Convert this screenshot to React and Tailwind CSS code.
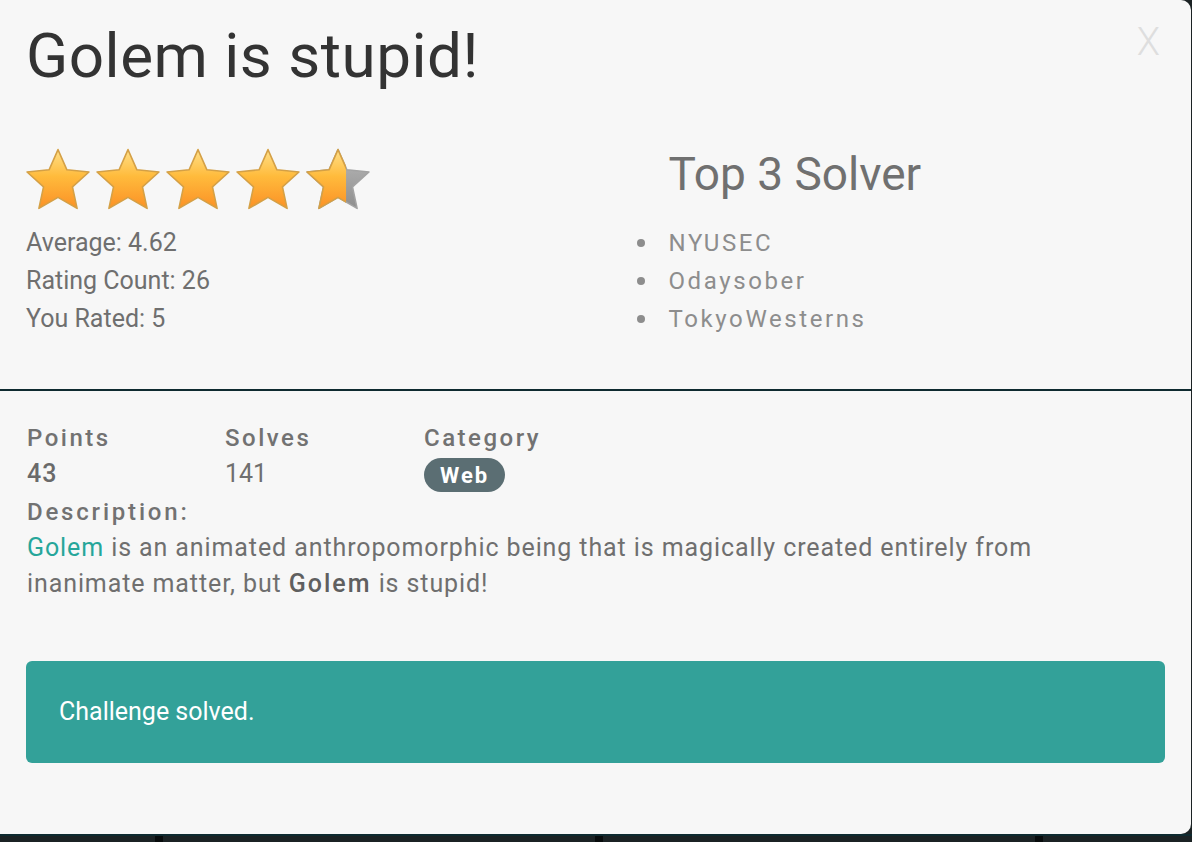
//
// ─── Fenêtre de détail d'un challenge (modale) ─────────────────────
//

import React from 'react'

const solvers = ['NYUSEC', 'Odaysober', 'TokyoWesterns']

const STAR =
  'M32 3 L40.5 22.3 L61.5 24.4 L45.8 38.5 L50.2 59.1 L32 48.5 L13.8 59.1 L18.2 38.5 L2.5 24.4 L23.5 22.3 Z'

function Star({ id, fill = 1 }) {
  return (
    <svg width="64" height="64" viewBox="1.5 1.5 61 61" className="shrink-0">
      <defs>
        <linearGradient id={`gold-${id}`} x1="0" y1="0" x2="0" y2="1">
          <stop offset="0" stopColor="#ffe08a" />
          <stop offset="0.45" stopColor="#ffbb3c" />
          <stop offset="1" stopColor="#fb9126" />
        </linearGradient>
        <linearGradient id={`grey-${id}`} x1="0" y1="0" x2="0" y2="1">
          <stop offset="0" stopColor="#b9b9b9" />
          <stop offset="1" stopColor="#8e8e8e" />
        </linearGradient>
        <clipPath id={`clip-${id}`}>
          <rect x="0" y="0" width={64 * fill} height="64" />
        </clipPath>
      </defs>
      {fill < 1 && (
        <path
          d={STAR}
          fill={`url(#grey-${id})`}
          stroke="#a3a3a3"
          strokeWidth="1.5"
          strokeLinejoin="round"
        />
      )}
      <g clipPath={`url(#clip-${id})`}>
        <path
          d={STAR}
          fill={`url(#gold-${id})`}
          stroke="#d4a046"
          strokeWidth="1.5"
          strokeLinejoin="round"
        />
      </g>
    </svg>
  )
}

function App() {
  return (
    <div className="w-full h-[842px] bg-[#1b2224] flex flex-col overflow-hidden font-['Roboto','Liberation_Sans',sans-serif]">
      <div className="flex">
        <div className="relative w-[1191px] h-[834px] bg-[#f7f7f7] rounded-tr-[10px] rounded-br-[10px] flex flex-col">
          {/* bouton fermer */}
          <span className="absolute top-[23px] right-[31px] text-[38px] leading-none font-light text-[#dedede]">
            X
          </span>

          {/* ─── En-tête : titre, notes, top solvers ─── */}
          <div className="px-[26px] pt-[21px] pb-[51px]">
            <h1 className="text-[62px] leading-[70px] tracking-[0.5px] text-[#333333]">
              Golem is stupid!
            </h1>
            <div className="flex mt-[57px]">
              <div className="w-1/2">
                <div className="flex gap-[6px]">
                  <Star id="a" />
                  <Star id="b" />
                  <Star id="c" />
                  <Star id="d" />
                  <Star id="e" fill={0.62} />
                </div>
                <div className="mt-[12px] text-[25px] leading-[38px] text-[#6f6f6f]">
                  <p>Average: 4.62</p>
                  <p>Rating Count: 26</p>
                  <p>You Rated: 5</p>
                </div>
              </div>
              <div className="w-1/2">
                <h3 className="pl-[73px] text-[46px] leading-[52px] text-[#707070]">
                  Top 3 Solver
                </h3>
                <ul className="mt-[24px] pl-[41px]">
                  {solvers.map(s => (
                    <li
                      key={s}
                      className="flex items-center text-[24px] leading-[38px] tracking-[2.6px] text-[#8d8d8d]"
                    >
                      <span className="w-2 h-2 rounded-full bg-[#8d8d8d] mr-[24px]" />
                      {s}
                    </li>
                  ))}
                </ul>
              </div>
            </div>
          </div>

          <div className="h-[2px] bg-[#0f2a30]" />

          {/* ─── Infos du challenge ─── */}
          <div className="px-[26px] pt-[29px]">
            <div className="flex">
              <div className="w-[199px] pl-px">
                <p className="text-[24px] leading-[36px] font-medium tracking-[2.5px] text-[#727272]">
                  Points
                </p>
                <p className="text-[25px] leading-[36px] font-medium tracking-[1px] text-[#6a6a6a]">
                  43
                </p>
              </div>
              <div className="w-[199px]">
                <p className="text-[24px] leading-[36px] font-medium tracking-[2.5px] text-[#727272]">
                  Solves
                </p>
                <p className="text-[25px] leading-[36px] text-[#6f6f6f]">141</p>
              </div>
              <div>
                <p className="text-[24px] leading-[36px] font-medium tracking-[2.5px] text-[#727272]">
                  Category
                </p>
                <span className="mt-[2px] inline-flex items-center h-[34px] px-[16px] rounded-full bg-[#5b6e73] text-white text-[22px] font-bold tracking-[2px]">
                  Web
                </span>
              </div>
            </div>
            <p className="mt-[2px] pl-px text-[24px] leading-[36px] font-medium tracking-[2.8px] text-[#727272]">
              Description:
            </p>
            <p className="max-w-[1040px] pl-px text-[25px] leading-[36px] tracking-[0.9px] text-[#6f6f6f]">
              <span className="text-[#26a69a]">Golem</span> is an animated anthropomorphic being
              that is magically created entirely from inanimate matter, but{' '}
              <span className="font-medium tracking-[2px] text-[#5f5f5f]">Golem</span> is stupid!
            </p>

            <div className="mt-[59px] h-[102px] rounded-[6px] bg-[#33a199] flex items-center px-[33px] text-[25px] text-white">
              Challenge solved.
            </div>
          </div>
        </div>
        <div className="flex-1" />
      </div>

      {/* ─── Fond de page derrière la modale ─── */}
      <div className="flex-1 border-t-2 border-[#0e2a30] flex">
        <div className="ml-[155px] w-2 h-[6px] bg-[#070b0c]" />
        <div className="ml-[432px] w-2 h-[6px] bg-[#070b0c]" />
        <div className="ml-[432px] w-2 h-[6px] bg-[#070b0c]" />
      </div>
    </div>
  )
}

export default App
